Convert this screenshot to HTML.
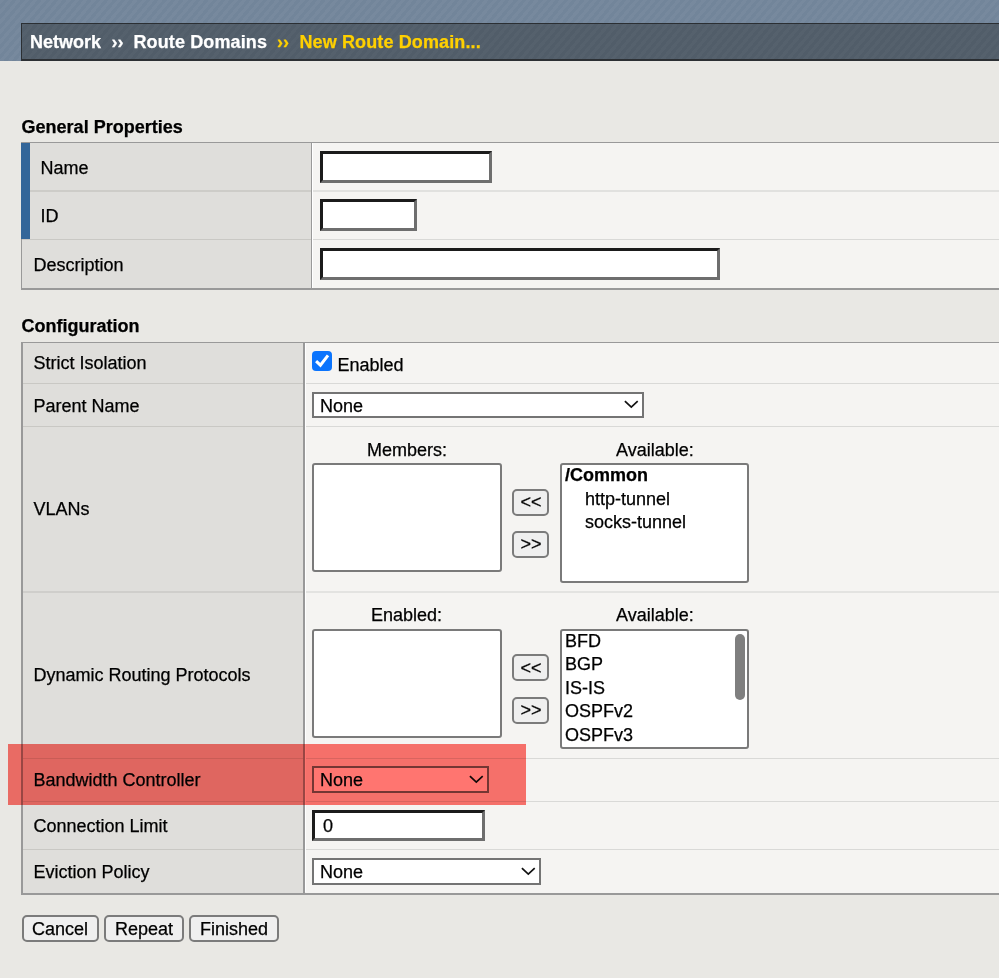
<!DOCTYPE html>
<html><head><meta charset="utf-8">
<style>
*{margin:0;padding:0;box-sizing:border-box}
html,body{width:999px;height:978px;overflow:hidden}
body{background:#e9e8e4;font-family:"Liberation Sans",sans-serif;font-size:18px;color:#000;position:relative;-webkit-text-stroke:0.25px currentColor}
.abs{position:absolute}
#banner{left:0;top:0;width:999px;height:61px;background-color:#72859a;
 background-image:repeating-linear-gradient(130deg,rgba(255,255,255,0.035) 0 3.2px,rgba(0,0,0,0) 3.2px 6.4px)}
#crumb{left:21px;top:23px;width:990px;height:38px;background-color:#515d69;border:1px solid #2b2f33;border-bottom:2px solid #2b2f33;
 background-image:repeating-linear-gradient(130deg,rgba(255,255,255,0.025) 0 3.2px,rgba(0,0,0,0) 3.2px 6.4px)}
.ct{font-weight:bold;color:#fff;white-space:pre;line-height:20px}
.h{font-weight:bold;white-space:pre;line-height:20px}
.t{white-space:pre;line-height:20px}
.lab{background:#dfdedb}
.val{background:#f5f4f2}
.hl{height:1px;background:#c9c8c4}
.inp{background:#fff;border-style:solid;border-width:3px;border-color:#1b1b1b #6e6e6e #6e6e6e #1b1b1b}
.sel{background:#fff;border:2px solid #747474}
.lst{background:#fff;border:2px solid #7a7a7a;border-radius:3px}
.btn{background:#efefef;border:2px solid #7b7b7b;border-radius:5px;text-align:center}
</style></head><body>
<div id="banner" class="abs"></div>
<div id="crumb" class="abs"></div>
<div class="abs ct" style="left:30px;top:32px">Network</div>
<div class="abs ct" style="left:111.5px;top:32px">››</div>
<div class="abs ct" style="left:133.5px;top:32px;letter-spacing:0.12px">Route Domains</div>
<div class="abs ct" style="left:277px;top:32px;color:#ffd000">››</div>
<div class="abs ct" style="left:299.5px;top:32px;color:#ffd000;letter-spacing:0.12px">New Route Domain...</div>

<div class="abs h" style="left:21.6px;top:117px">General Properties</div>
<!-- table 1 -->
<div class="abs" style="left:21px;top:142px;width:990px;height:148px;background:#999"></div>
<div class="abs lab" style="left:22px;top:143px;width:289px;height:145px"></div>
<div class="abs val" style="left:312px;top:143px;width:700px;height:145px"></div>
<div class="abs" style="left:21px;top:143px;width:9px;height:96px;background:#336699"></div>
<div class="abs hl" style="left:30px;top:190px;width:281px;height:2px;background:#cdccc8"></div>
<div class="abs hl" style="left:312px;top:190px;width:700px;height:2px;background:#e1e1df"></div>
<div class="abs hl" style="left:22px;top:239px;width:289px"></div>
<div class="abs hl" style="left:312px;top:239px;width:700px;background:#d9d9d7"></div>
<div class="abs" style="left:312px;top:143px;width:1px;height:145px;background:#fff"></div>
<div class="abs t" style="left:40.5px;top:158px">Name</div>
<div class="abs t" style="left:40.5px;top:206px">ID</div>
<div class="abs t" style="left:33.5px;top:255px">Description</div>
<div class="abs inp" style="left:320px;top:151px;width:172px;height:32px"></div>
<div class="abs inp" style="left:320px;top:199px;width:97px;height:32px"></div>
<div class="abs inp" style="left:320px;top:248px;width:400px;height:32px"></div>

<div class="abs h" style="left:21.5px;top:316px">Configuration</div>
<!-- table 2 -->
<div class="abs" style="left:21px;top:342px;width:990px;height:553px;background:#999"></div>
<div class="abs lab" style="left:23px;top:343px;width:280px;height:550px"></div>
<div class="abs val" style="left:305px;top:343px;width:700px;height:550px"></div>
<div class="abs hl" style="left:23px;top:383px;width:280px"></div>
<div class="abs hl" style="left:305px;top:383px;width:700px;background:#d9d9d7"></div>
<div class="abs hl" style="left:23px;top:426px;width:280px"></div>
<div class="abs hl" style="left:305px;top:426px;width:700px;background:#d9d9d7"></div>
<div class="abs hl" style="left:23px;top:591px;width:280px;height:2px;background:#cfcecb"></div>
<div class="abs hl" style="left:305px;top:591px;width:700px;height:2px;background:#e3e3e1"></div>
<div class="abs hl" style="left:23px;top:758px;width:280px"></div>
<div class="abs hl" style="left:305px;top:758px;width:700px;background:#d9d9d7"></div>
<div class="abs hl" style="left:23px;top:801px;width:280px"></div>
<div class="abs hl" style="left:305px;top:801px;width:700px;background:#d9d9d7"></div>
<div class="abs hl" style="left:23px;top:849px;width:280px"></div>
<div class="abs hl" style="left:305px;top:849px;width:700px;background:#d9d9d7"></div>
<div class="abs" style="left:305px;top:343px;width:1px;height:549px;background:#fff"></div>

<div class="abs t" style="left:33.5px;top:353px">Strict Isolation</div>
<div class="abs t" style="left:33.5px;top:396px">Parent Name</div>
<div class="abs t" style="left:33.5px;top:499px">VLANs</div>
<div class="abs t" style="left:33.5px;top:665px">Dynamic Routing Protocols</div>
<div class="abs t" style="left:33.5px;top:770px">Bandwidth Controller</div>
<div class="abs t" style="left:33.5px;top:816px">Connection Limit</div>
<div class="abs t" style="left:33.5px;top:862px">Eviction Policy</div>

<!-- strict isolation -->
<div class="abs" style="left:312px;top:351px;width:20px;height:20px;background:#0b74fd;border-radius:4px"></div>
<svg class="abs" style="left:312px;top:351px" width="20" height="20"><path d="M4.1 10.2 L8.4 14.2 L16 4.4" stroke="#fff" stroke-width="3" fill="none"/></svg>
<div class="abs t" style="left:337.5px;top:355px">Enabled</div>

<!-- parent name -->
<div class="abs sel" style="left:312px;top:392px;width:332px;height:26px"></div>
<div class="abs t" style="left:320px;top:396px">None</div>
<svg class="abs" style="left:623px;top:399px" width="16" height="10"><path d="M1.9 2.1 L8.3 8.2 L14.7 2.1" stroke="#111" stroke-width="1.7" fill="none"/></svg>

<!-- VLANs -->
<div class="abs t" style="left:367px;top:440px">Members:</div>
<div class="abs lst" style="left:312px;top:463px;width:190px;height:109px"></div>
<div class="abs btn" style="left:512px;top:489px;width:37px;height:27px"></div>
<div class="abs t" style="left:520.5px;top:492px">&lt;&lt;</div>
<div class="abs btn" style="left:512px;top:531px;width:37px;height:27px"></div>
<div class="abs t" style="left:520.5px;top:534px">&gt;&gt;</div>
<div class="abs t" style="left:616px;top:440px">Available:</div>
<div class="abs lst" style="left:560px;top:463px;width:189px;height:120px"></div>
<div class="abs h" style="left:565px;top:465px">/Common</div>
<div class="abs t" style="left:585px;top:489px">http-tunnel</div>
<div class="abs t" style="left:585px;top:512px">socks-tunnel</div>

<!-- DRP -->
<div class="abs t" style="left:371px;top:605px">Enabled:</div>
<div class="abs lst" style="left:312px;top:629px;width:190px;height:109px"></div>
<div class="abs btn" style="left:512px;top:654px;width:37px;height:27px"></div>
<div class="abs t" style="left:520.5px;top:658px">&lt;&lt;</div>
<div class="abs btn" style="left:512px;top:697px;width:37px;height:27px"></div>
<div class="abs t" style="left:520.5px;top:700px">&gt;&gt;</div>
<div class="abs t" style="left:616px;top:605px">Available:</div>
<div class="abs lst" style="left:560px;top:629px;width:189px;height:120px;overflow:hidden"></div>
<div class="abs t" style="left:565px;top:631px">BFD</div>
<div class="abs t" style="left:565px;top:654px">BGP</div>
<div class="abs t" style="left:565px;top:678px">IS-IS</div>
<div class="abs t" style="left:565px;top:701px">OSPFv2</div>
<div class="abs t" style="left:565px;top:725px">OSPFv3</div>
<div class="abs" style="left:735px;top:634px;width:10px;height:66px;background:#7f7f7f;border-radius:5px"></div>

<!-- bandwidth -->
<div class="abs sel" style="left:312px;top:766px;width:177px;height:27px"></div>
<div class="abs t" style="left:320px;top:770px">None</div>
<svg class="abs" style="left:468px;top:774px" width="16" height="10"><path d="M1.9 2.1 L8.3 8.2 L14.7 2.1" stroke="#111" stroke-width="1.7" fill="none"/></svg>

<!-- connection limit -->
<div class="abs inp" style="left:312px;top:810px;width:173px;height:31px"></div>
<div class="abs t" style="left:323px;top:816px">0</div>

<!-- eviction -->
<div class="abs sel" style="left:312px;top:858px;width:229px;height:27px"></div>
<div class="abs t" style="left:320px;top:862px">None</div>
<svg class="abs" style="left:520px;top:866px" width="16" height="10"><path d="M1.9 2.1 L8.3 8.2 L14.7 2.1" stroke="#111" stroke-width="1.7" fill="none"/></svg>

<!-- buttons -->
<div class="abs btn" style="left:22px;top:915px;width:77px;height:27px"></div>
<div class="abs t" style="left:32px;top:919px">Cancel</div>
<div class="abs btn" style="left:104px;top:915px;width:80px;height:27px"></div>
<div class="abs t" style="left:115px;top:919px">Repeat</div>
<div class="abs btn" style="left:189px;top:915px;width:90px;height:27px"></div>
<div class="abs t" style="left:200px;top:919px">Finished</div>

<!-- red overlay -->
<div class="abs" style="left:8px;top:744px;width:518px;height:61px;background:#ff7570;mix-blend-mode:multiply"></div>
</body></html>
